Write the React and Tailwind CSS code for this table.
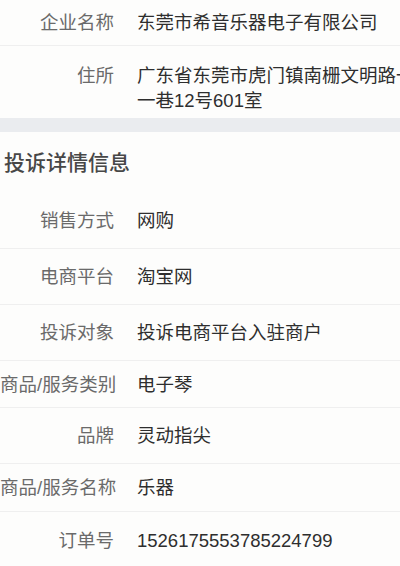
import React from 'react';

const font = { fontFamily: '"Liberation Sans", "Noto Sans CJK SC", sans-serif' };

const companyRows = [
  { label: '企业名称', value: '东莞市希音乐器电子有限公司' },
];

const detailRows = [
  { label: '销售方式', value: '网购', h: 'h-[56px]' },
  { label: '电商平台', value: '淘宝网', h: 'h-[56px]' },
  { label: '投诉对象', value: '投诉电商平台入驻商户', h: 'h-[56px]' },
  { label: '商品/服务类别', value: '电子琴', h: 'h-[47px]' },
  { label: '品牌', value: '灵动指尖', h: 'h-[56px]' },
  { label: '商品/服务名称', value: '乐器', h: 'h-[48px]' },
  { label: '订单号', value: '1526175553785224799', h: 'h-[56px]' },
];

function Row({ label, children, className = '', divider = true }) {
  return (
    <div className={`flex ${className} ${divider ? 'border-b border-[#efefef]' : ''}`}>
      <div className="w-[114px] shrink-0 whitespace-nowrap text-right text-[#6a6a6a]">{label}</div>
      <div className="ml-[23px] w-[270px] shrink-0 text-[#2e2e2e]">{children}</div>
    </div>
  );
}

export default function App() {
  return (
    <div className="h-[566px] w-[400px] overflow-hidden bg-[#fdfdfc] text-[18.5px] leading-[25px]" style={font}>
      {/* Company block */}
      {companyRows.map((r) => (
        <Row key={r.label} label={r.label} className="h-[46px] items-center">
          <span className="whitespace-nowrap">{r.value}</span>
        </Row>
      ))}
      <Row label="住所" className="h-[72px] pt-[17px]" divider={false}>
        <div className="whitespace-nowrap">广东省东莞市虎门镇南栅文明路一</div>
        <div className="whitespace-nowrap">一巷12号601室</div>
      </Row>

      {/* Gap band */}
      <div className="h-[14px] bg-[#eaecef]" />

      {/* Complaint details */}
      <div className="flex h-[61px] items-center pl-[4px] text-[21px] font-medium text-[#474747]">
        投诉详情信息
      </div>
      {detailRows.map((r, i) => (
        <Row key={r.label} label={r.label} className={`${r.h} items-center`} divider={i < detailRows.length - 1}>
          <span className="whitespace-nowrap">{r.value}</span>
        </Row>
      ))}
    </div>
  );
}
